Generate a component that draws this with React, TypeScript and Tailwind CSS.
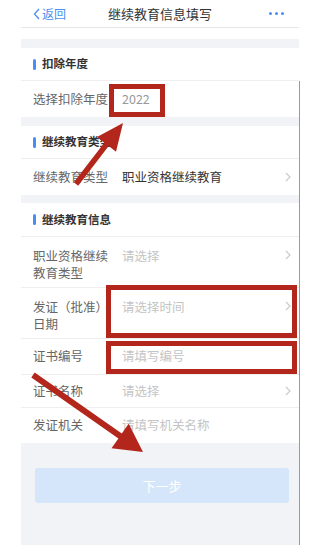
import React from "react";

const font = { fontFamily: '"Noto Sans CJK SC", "Noto Sans", sans-serif' };

function Chevron() {
  return (
    <svg width="6" height="10" viewBox="0 0 6 10" className="shrink-0">
      <path d="M1 1l4 4-4 4" fill="none" stroke="#c9c9c9" strokeWidth="1.1" />
    </svg>
  );
}

function SectionTitle({ title, tall }: { title: string; tall?: boolean }) {
  return (
    <div
      className={
        "flex items-center pl-[12px] border-b border-[#eeeeee] " + (tall ? "h-[34px]" : "h-[33px]")
      }
    >
      <span className="w-[3px] h-[11px] rounded-sm bg-[#4a8cf4] mr-[6px]" />
      <span className="text-[11.5px] font-bold text-[#333]">{title}</span>
    </div>
  );
}

function TallRow({ label, placeholder }: { label: string; placeholder: string }) {
  return (
    <div className="h-[51px] flex items-start pt-[10px] pl-[12px] pr-[8px] border-b border-[#eeeeee]">
      <div className="w-[78px] text-[12.5px] leading-[17px] text-[#666]">{label}</div>
      <div className="flex-1 pl-[11px] text-[12.5px] leading-[17px] text-[#c4c4c4]">{placeholder}</div>
      <div className="pt-[3px]">
        <Chevron />
      </div>
    </div>
  );
}

function Row({
  label,
  placeholder,
  arrow,
  h,
  last,
}: {
  label: string;
  placeholder: string;
  arrow?: boolean;
  h: string;
  last?: boolean;
}) {
  return (
    <div className={"flex items-center pl-[12px] pr-[8px] " + h + (last ? "" : " border-b border-[#eeeeee]")}>
      <div className="w-[78px] text-[12.5px] text-[#666]">{label}</div>
      <div className="flex-1 pl-[11px] text-[12.5px] text-[#c4c4c4]">{placeholder}</div>
      {arrow && <Chevron />}
    </div>
  );
}

export default function App() {
  return (
    <div className="relative w-[332px] h-[545px] bg-white overflow-hidden flex" style={font}>
      <div className="w-[21px] shrink-0" />

      <div className="w-[278px] shrink-0 flex flex-col bg-[#f2f3f7]">
        {/* Nav bar */}
        <div className="bg-white h-[28px] flex items-center px-[12px] border-b border-[#e6e6e6]">
          <div className="w-[60px] flex items-center text-[#4a8ff0] text-[12px]">
            <svg width="7" height="12" viewBox="0 0 7 12" className="mr-[2px]">
              <path d="M6 1L1.5 6 6 11" fill="none" stroke="#4a8ff0" strokeWidth="1.3" />
            </svg>
            返回
          </div>
          <div className="flex-1 text-center text-[13px] text-[#333]">继续教育信息填写</div>
          <div className="w-[60px] flex justify-end gap-[3px] pr-[3px]">
            <span className="w-[3px] h-[3px] rounded-full bg-[#4a8ff0]" />
            <span className="w-[3px] h-[3px] rounded-full bg-[#4a8ff0]" />
            <span className="w-[3px] h-[3px] rounded-full bg-[#4a8ff0]" />
          </div>
        </div>
        <div className="h-[11px] bg-white" />
        <div className="h-[9px]" />

        <div className="bg-white">
          <SectionTitle title="扣除年度" />
          <div className="h-[36px] flex items-center pl-[12px]">
            <div className="w-[78px] text-[12.5px] text-[#666]">选择扣除年度</div>
            <div className="pl-[11px] text-[12.5px] text-[#999]">2022</div>
          </div>
        </div>
        <div className="h-[9px]" />

        <div className="bg-white">
          <SectionTitle title="继续教育类型" />
          <div className="h-[36px] flex items-center pl-[12px] pr-[8px]">
            <div className="w-[78px] text-[12.5px] text-[#666]">继续教育类型</div>
            <div className="flex-1 pl-[11px] text-[12.5px] text-[#333]">职业资格继续教育</div>
            <Chevron />
          </div>
        </div>
        <div className="h-[8px]" />

        <div className="bg-white">
          <SectionTitle title="继续教育信息" tall />
          <TallRow label="职业资格继续教育类型" placeholder="请选择" />
          <TallRow label="发证（批准）日期" placeholder="请选择时间" />
          <Row label="证书编号" placeholder="请填写编号" h="h-[36px]" />
          <Row label="证书名称" placeholder="请选择" arrow h="h-[33px]" />
          <Row label="发证机关" placeholder="请填写机关名称" h="h-[35px]" last />
        </div>

        <div className="pt-[25px] pl-[14px] pr-[10px]">
          <div className="h-[35px] rounded-[3px] bg-[#d5e6fa] flex items-center justify-center text-white text-[13px]">
            下一步
          </div>
        </div>
      </div>

      <div className="w-px shrink-0 mt-[81px] bg-[#9a9a9a]" />

      {/* Annotation boxes */}
      <div className="absolute left-[109px] top-[84px] w-[56px] h-[33px] border-[5px] border-[#b3261c]" />
      <div className="absolute left-[106px] top-[285px] w-[191px] h-[53px] border-[5px] border-[#b3261c]" />
      <div className="absolute left-[106px] top-[341px] w-[191px] h-[33px] border-[5px] border-[#b3261c]" />

      {/* Annotation arrows */}
      <svg className="absolute left-0 top-0" width="332" height="545" viewBox="0 0 332 545">
        <polygon
          points="73.8,182.3 104.3,142.7 97,137.1 123,123 116,151.7 108.7,146.1 78.2,185.7"
          fill="#b3261c"
        />
        <polygon
          points="34.7,372.5 121.8,433.5 128.7,423.7 143,452 111.5,448.3 118.4,438.5 31.3,377.5"
          fill="#b3261c"
        />
      </svg>
    </div>
  );
}
